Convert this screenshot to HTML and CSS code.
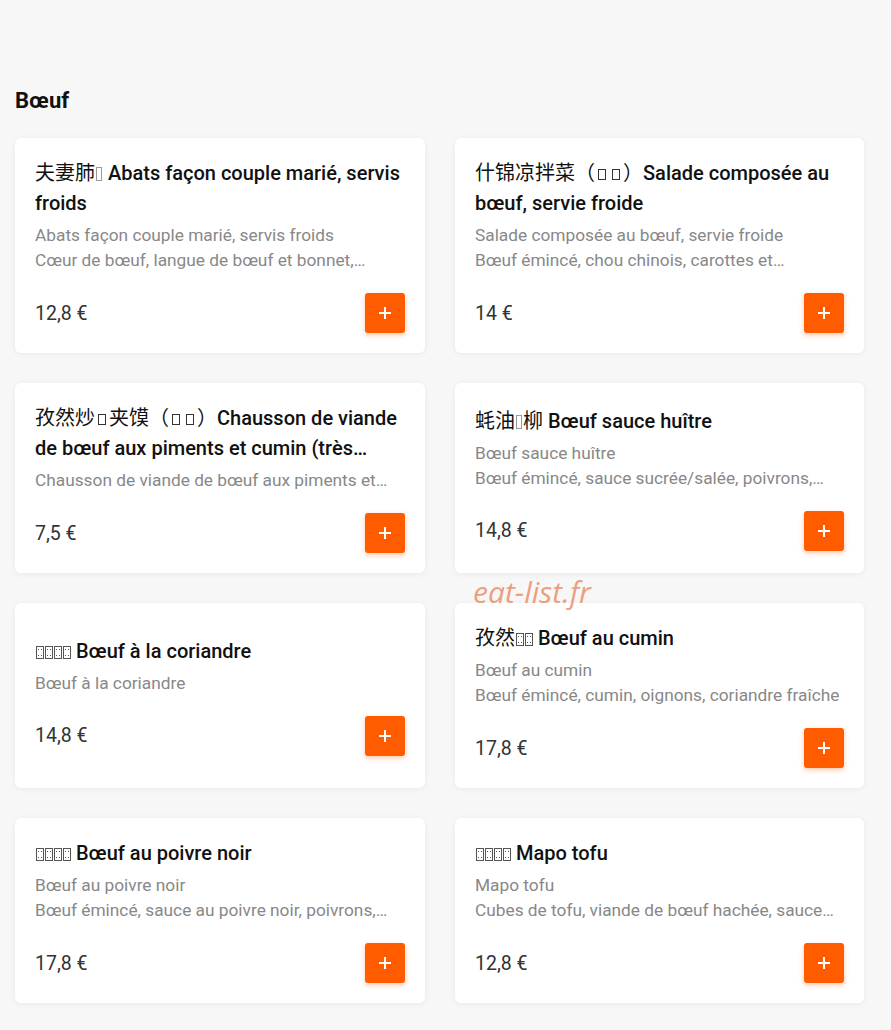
FILE: index.html
```html
<!DOCTYPE html>
<html lang="fr">
<head>
<meta charset="utf-8">
<title>Bœuf</title>
<link rel="stylesheet" href="styles.css">
</head>
<body>
<main class="menu">
  <section class="category">
    <h2 class="category-title">Bœuf</h2>
    <div class="dish-grid">

      <article class="dish">
        <h3 class="dish-name"><span class="zh">夫妻肺<span class="miss narrow"></span></span> Abats façon couple marié, servis froids</h3>
        <div class="dish-desc">
          <p class="line">Abats façon couple marié, servis froids</p>
          <p class="line">Cœur de bœuf, langue de bœuf et bonnet,…</p>
        </div>
        <div class="dish-foot">
          <span class="price">12,8 €</span>
          <button class="add" type="button" aria-label="Ajouter"><svg viewBox="0 0 14 14" width="14" height="14"><path d="M7 1v12M1 7h12"/></svg></button>
        </div>
      </article>

      <article class="dish">
        <h3 class="dish-name"><span class="zh">什锦凉拌菜（<span class="miss"></span><span class="miss"></span>）</span>Salade composée au bœuf, servie froide</h3>
        <div class="dish-desc">
          <p class="line">Salade composée au bœuf, servie froide</p>
          <p class="line">Bœuf émincé, chou chinois, carottes et…</p>
        </div>
        <div class="dish-foot">
          <span class="price">14 €</span>
          <button class="add" type="button" aria-label="Ajouter"><svg viewBox="0 0 14 14" width="14" height="14"><path d="M7 1v12M1 7h12"/></svg></button>
        </div>
      </article>

      <article class="dish">
        <h3 class="dish-name"><span class="zh">孜然炒<span class="miss"></span>夹馍（<span class="miss"></span><span class="miss"></span>）</span>Chausson de viande de bœuf aux piments et cumin (très…</h3>
        <div class="dish-desc">
          <p class="line">Chausson de viande de bœuf aux piments et…</p>
        </div>
        <div class="dish-foot">
          <span class="price">7,5 €</span>
          <button class="add" type="button" aria-label="Ajouter"><svg viewBox="0 0 14 14" width="14" height="14"><path d="M7 1v12M1 7h12"/></svg></button>
        </div>
      </article>

      <article class="dish">
        <h3 class="dish-name"><span class="zh">蚝油<span class="miss narrow"></span>柳</span> Bœuf sauce huître</h3>
        <div class="dish-desc">
          <p class="line">Bœuf sauce huître</p>
          <p class="line">Bœuf émincé, sauce sucrée/salée, poivrons,…</p>
        </div>
        <div class="dish-foot">
          <span class="price">14,8 €</span>
          <button class="add" type="button" aria-label="Ajouter"><svg viewBox="0 0 14 14" width="14" height="14"><path d="M7 1v12M1 7h12"/></svg></button>
        </div>
      </article>

      <article class="dish">
        <h3 class="dish-name"><span class="zh"><span class="miss hex"></span><span class="miss hex"></span><span class="miss hex"></span><span class="miss hex"></span></span> Bœuf à la coriandre</h3>
        <div class="dish-desc">
          <p class="line">Bœuf à la coriandre</p>
        </div>
        <div class="dish-foot">
          <span class="price">14,8 €</span>
          <button class="add" type="button" aria-label="Ajouter"><svg viewBox="0 0 14 14" width="14" height="14"><path d="M7 1v12M1 7h12"/></svg></button>
        </div>
      </article>

      <article class="dish">
        <h3 class="dish-name"><span class="zh">孜然<span class="miss hex"></span><span class="miss hex"></span></span> Bœuf au cumin</h3>
        <div class="dish-desc">
          <p class="line">Bœuf au cumin</p>
          <p class="line">Bœuf émincé, cumin, oignons, coriandre fraîche</p>
        </div>
        <div class="dish-foot">
          <span class="price">17,8 €</span>
          <button class="add" type="button" aria-label="Ajouter"><svg viewBox="0 0 14 14" width="14" height="14"><path d="M7 1v12M1 7h12"/></svg></button>
        </div>
      </article>

      <article class="dish">
        <h3 class="dish-name"><span class="zh"><span class="miss hex"></span><span class="miss hex"></span><span class="miss hex"></span><span class="miss hex"></span></span> Bœuf au poivre noir</h3>
        <div class="dish-desc">
          <p class="line">Bœuf au poivre noir</p>
          <p class="line">Bœuf émincé, sauce au poivre noir, poivrons,…</p>
        </div>
        <div class="dish-foot">
          <span class="price">17,8 €</span>
          <button class="add" type="button" aria-label="Ajouter"><svg viewBox="0 0 14 14" width="14" height="14"><path d="M7 1v12M1 7h12"/></svg></button>
        </div>
      </article>

      <article class="dish">
        <h3 class="dish-name"><span class="zh"><span class="miss hex"></span><span class="miss hex"></span><span class="miss hex"></span><span class="miss hex"></span></span> Mapo tofu</h3>
        <div class="dish-desc">
          <p class="line">Mapo tofu</p>
          <p class="line">Cubes de tofu, viande de bœuf hachée, sauce…</p>
        </div>
        <div class="dish-foot">
          <span class="price">12,8 €</span>
          <button class="add" type="button" aria-label="Ajouter"><svg viewBox="0 0 14 14" width="14" height="14"><path d="M7 1v12M1 7h12"/></svg></button>
        </div>
      </article>

    </div>
  </section>
  <span class="watermark">eat-list.fr</span>
</main>
</body>
</html>
```

FILE: styles.css
```css
* {
  box-sizing: border-box;
}

html,
body {
  margin: 0;
  background: #f7f7f7;
}

body {
  font-family: Roboto, "Noto Sans CJK SC", sans-serif;
  color: #111;
}

.menu {
  position: relative;
  padding: 88px 27px 30px 15px;
}

.category-title {
  margin: 0 0 24px;
  font-size: 22px;
  line-height: 26px;
  font-weight: 700;
  color: #111;
}

.dish-grid {
  display: grid;
  grid-template-columns: 410px 409px;
  column-gap: 30px;
  row-gap: 30px;
}

/* card: content block is centred vertically when the row is taller */
.dish {
  display: flex;
  flex-direction: column;
  justify-content: center;
  padding: 20px;
  background: #fff;
  border-radius: 6px;
  box-shadow: 0 1px 6px rgba(0, 0, 0, 0.06);
}

.dish-name {
  margin: 0;
  font-size: 20px;
  line-height: 30px;
  font-weight: 500;
  color: #111;
  display: -webkit-box;
  -webkit-box-orient: vertical;
  -webkit-line-clamp: 2;
  overflow: hidden;
}

.zh {
  font-family: "Noto Sans CJK SC", sans-serif;
  font-weight: 400;
  font-size: 20px;
  line-height: 1;
}

/* boxes drawn for characters the font cannot show */
.miss {
  display: inline-block;
  width: 8px;
  height: 11px;
  margin: 0 3px;
  border: 1px solid #333;
  vertical-align: 0;
}

.miss.narrow {
  width: 6px;
  height: 14px;
  margin: 0 1px;
  border-color: #999;
  vertical-align: -1px;
}

.miss.hex {
  width: 8px;
  height: 13px;
  margin: 0 0 0 1px;
  border: 1px solid #555;
  vertical-align: -1px;
  background:
    linear-gradient(#555, #555) 1px 2px / 1px 1px no-repeat,
    linear-gradient(#555, #555) 4px 2px / 1px 1px no-repeat,
    linear-gradient(#555, #555) 1px 8px / 1px 1px no-repeat,
    linear-gradient(#555, #555) 4px 8px / 1px 1px no-repeat;
}

.dish-desc {
  margin-top: 5px;
}

.line {
  margin: 0;
  font-size: 17.3px;
  line-height: 25px;
  color: #888;
  white-space: nowrap;
  overflow: hidden;
  text-overflow: ellipsis;
}

.dish-foot {
  margin-top: 20px;
  display: flex;
  align-items: center;
  justify-content: space-between;
}

.price {
  font-size: 19.5px;
  font-weight: 400;
  color: #333;
}

.add {
  width: 40px;
  height: 40px;
  padding: 0;
  border: 0;
  border-radius: 3px;
  background: #ff5c00;
  box-shadow: 0 2px 5px rgba(255, 92, 0, 0.35);
  display: flex;
  align-items: center;
  justify-content: center;
  cursor: pointer;
}

.add svg {
  display: block;
  fill: none;
  stroke: #fff;
  stroke-width: 2;
}

.watermark {
  position: absolute;
  left: 473px;
  top: 573px;
  font-family: "Open Sans", sans-serif;
  font-style: italic;
  font-size: 30px;
  line-height: 38px;
  color: rgba(232, 130, 85, 0.75);
  pointer-events: none;
}
```
